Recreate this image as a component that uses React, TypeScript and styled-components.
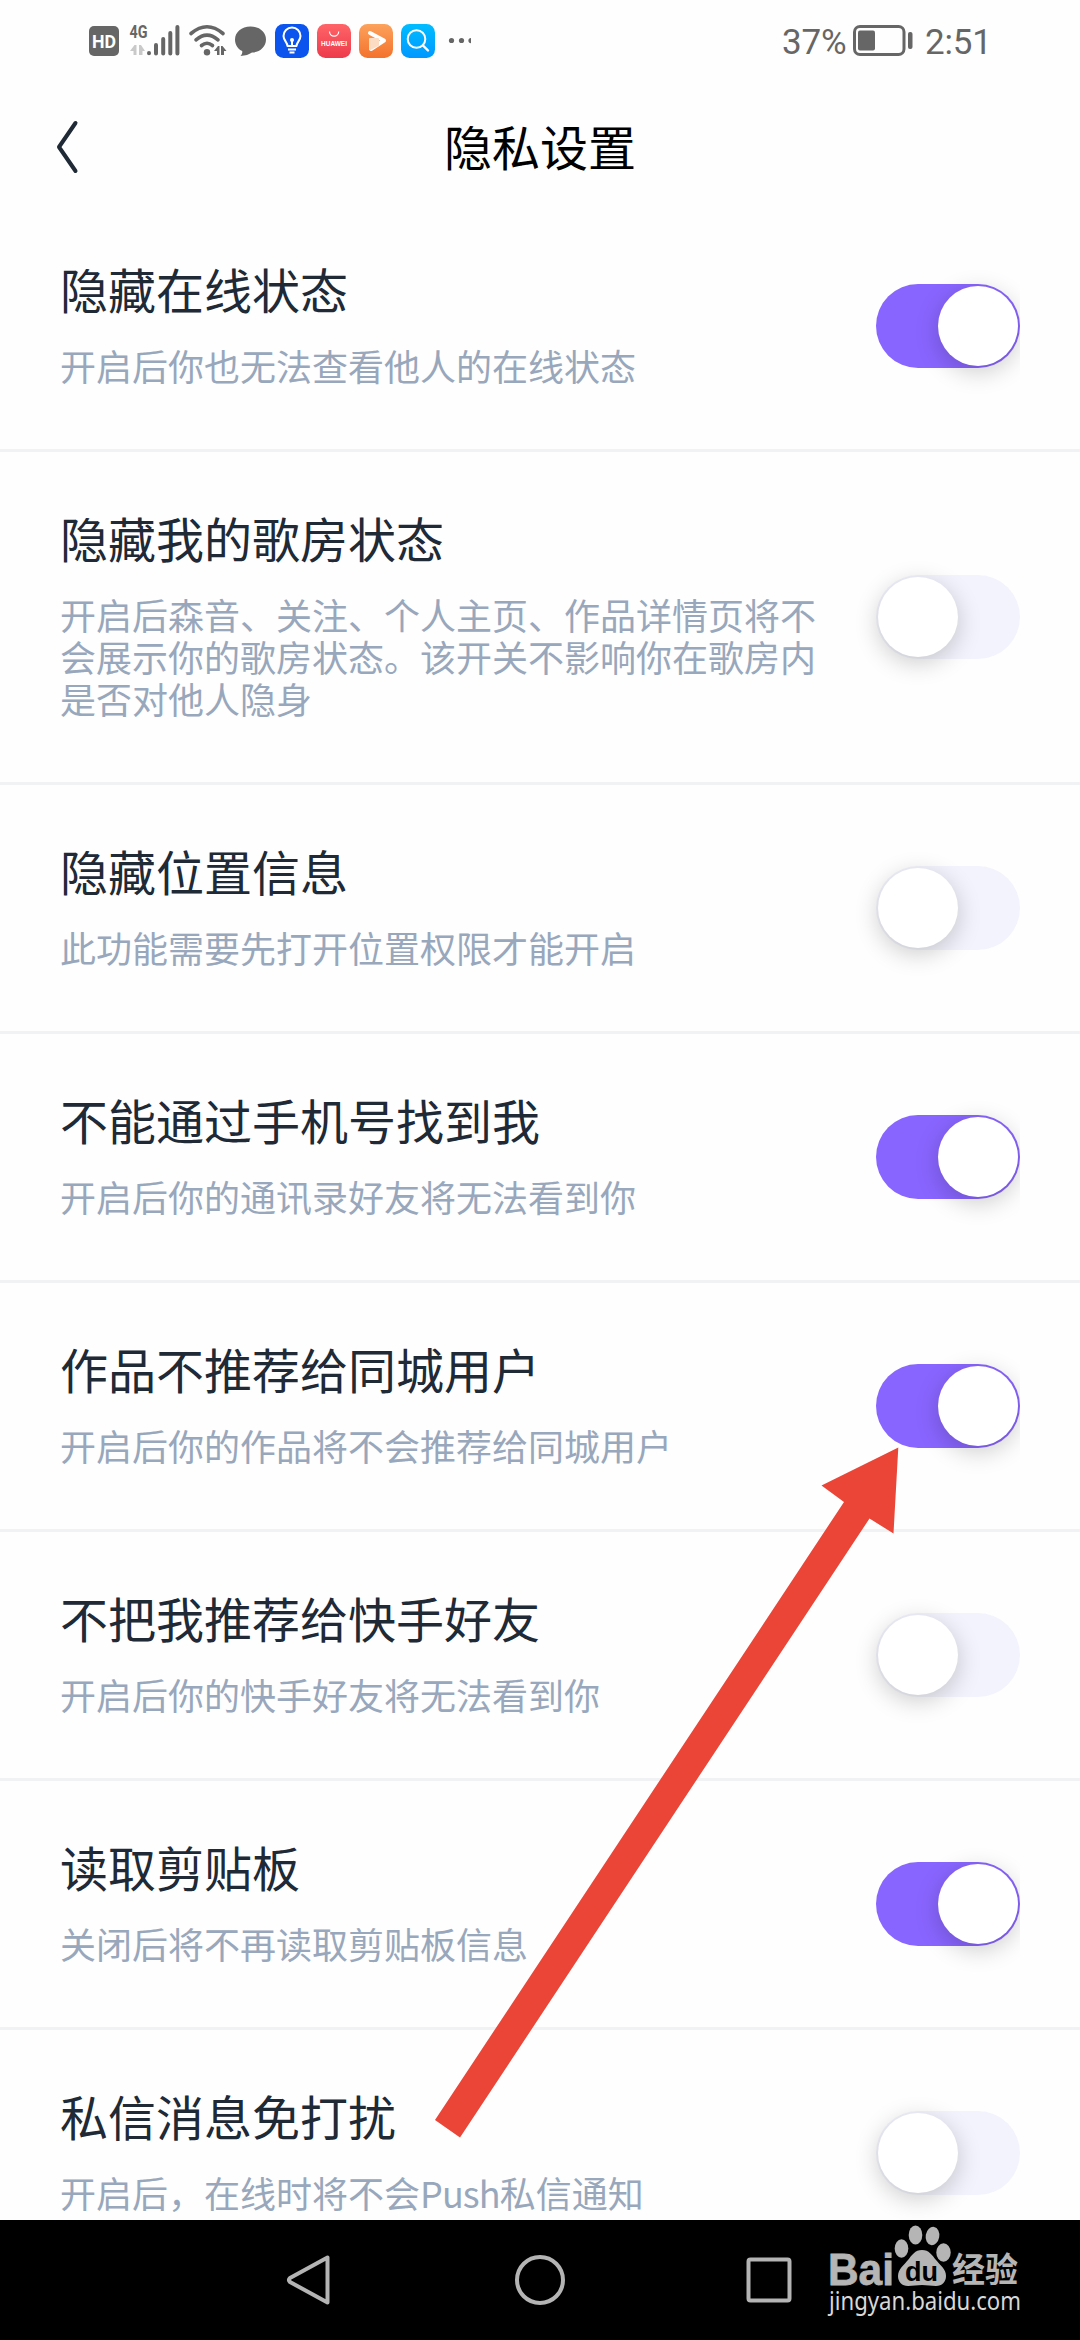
import React from 'react';
import styled, { createGlobalStyle } from 'styled-components';

const GlobalStyle = createGlobalStyle`
  * { box-sizing: border-box; }
  body {
    margin: 0;
    background: #fefefe;
    font-family: "Noto Sans CJK SC", "Noto Sans", sans-serif;
  }
`;

const Screen = styled.div`
  position: relative;
  display: flex;
  flex-direction: column;
  width: 1080px;
  height: 2340px;
  overflow: hidden;
  background: #fefefe;
`;

const StatusBar = styled.div`
  display: flex;
  justify-content: space-between;
  align-items: center;
  flex: none;
  height: 82px;
  padding: 0 95px 0 89px;
`;

const StatusIcons = styled.svg`
  display: block;
  width: 384px;
  height: 82px;
`;

const StatusRight = styled.div`
  display: flex;
  align-items: center;
  height: 82px;
`;

const StatusText = styled.span<{ $width: number }>`
  width: ${(p) => p.$width}px;
  padding-top: 3px;
  font: 400 35px/40px Roboto, sans-serif;
  color: #666;
  white-space: nowrap;
  letter-spacing: -0.2px;
`;

const Battery = styled.svg`
  display: block;
  width: 60px;
  height: 31px;
  margin: 0 12px 1px 7px;
`;

const Header = styled.header`
  display: grid;
  grid-template-columns: 120px 1fr 120px;
  align-items: center;
  flex: none;
  height: 121px;
  padding-top: 9px;
`;

const BackButton = styled.button`
  display: flex;
  height: 56px;
  margin: 0 0 1px 53px;
  padding: 0;
  border: 0;
  background: none;
`;

const PageTitle = styled.h1`
  margin: 0 0 5px;
  font-size: 48px;
  line-height: 60px;
  font-weight: 400;
  text-align: center;
  color: #000;
`;

const List = styled.main`
  flex: 1;
  min-height: 0;
  overflow: hidden;
`;

const Row = styled.section`
  display: flex;
  align-items: center;
  justify-content: space-between;
  padding: 57px 60px 63px;
  border-bottom: 3px solid #f1f2f4;
`;

const Copy = styled.div`
  display: flex;
  flex-direction: column;
  gap: 28px;
  width: 762px;
`;

const Label = styled.h2`
  margin: 0;
  font-size: 48px;
  line-height: 56px;
  font-weight: 400;
  color: #202936;
`;

const Description = styled.p`
  margin: 0;
  font-size: 36px;
  line-height: 42px;
  color: #98a7bb;
`;

const Latin = styled.span`
  letter-spacing: -0.9px;
`;

const Track = styled.button<{ $on: boolean }>`
  display: flex;
  justify-content: ${(p) => (p.$on ? 'flex-end' : 'flex-start')};
  flex: none;
  width: 144px;
  height: 84px;
  margin: 6px 0 0;
  padding: 2px;
  border: 0;
  border-radius: 42px;
  background: ${(p) => (p.$on ? '#8965ff' : '#f3f3fd')};
  clip-path: inset(-40px 0 -40px -40px);
`;

const Knob = styled.span`
  width: 80px;
  height: 80px;
  border-radius: 50%;
  background: #fff;
  box-shadow: 0 6px 24px rgba(0, 0, 0, 0.2);
`;

const NavBar = styled.nav`
  display: flex;
  flex: none;
  height: 120px;
  background: #000;
`;

const NavIcons = styled.svg`
  display: block;
  width: 1080px;
  height: 120px;
`;

const Arrow = styled.svg`
  position: absolute;
  left: 425px;
  top: 1440px;
  width: 480px;
  height: 705px;
  pointer-events: none;
`;

const Watermark = styled.svg`
  position: absolute;
  left: 820px;
  top: 2220px;
  width: 210px;
  height: 110px;
`;

type Setting = { label: string; text: React.ReactNode; on: boolean };

const settings: Setting[] = [
  { label: '隐藏在线状态', text: '开启后你也无法查看他人的在线状态', on: true },
  {
    label: '隐藏我的歌房状态',
    text: '开启后森音、关注、个人主页、作品详情页将不会展示你的歌房状态。该开关不影响你在歌房内是否对他人隐身',
    on: false,
  },
  { label: '隐藏位置信息', text: '此功能需要先打开位置权限才能开启', on: false },
  { label: '不能通过手机号找到我', text: '开启后你的通讯录好友将无法看到你', on: true },
  { label: '作品不推荐给同城用户', text: '开启后你的作品将不会推荐给同城用户', on: true },
  { label: '不把我推荐给快手好友', text: '开启后你的快手好友将无法看到你', on: false },
  { label: '读取剪贴板', text: '关闭后将不再读取剪贴板信息', on: true },
  {
    label: '私信消息免打扰',
    text: (
      <>
        开启后，在线时将不会<Latin>Push</Latin>私信通知
      </>
    ),
    on: false,
  },
];

function StatusGlyphs() {
  return (
    <StatusIcons viewBox="89 0 384 82">
      <defs>
        <linearGradient id="red" x1="0" y1="0" x2="0" y2="1">
          <stop offset="0" stopColor="#ff6468" />
          <stop offset="1" stopColor="#ee3a4c" />
        </linearGradient>
        <linearGradient id="orange" x1="0" y1="0" x2="0" y2="1">
          <stop offset="0" stopColor="#fca25c" />
          <stop offset="1" stopColor="#f4722c" />
        </linearGradient>
        <linearGradient id="blue" x1="0" y1="0" x2="0" y2="1">
          <stop offset="0" stopColor="#00bdff" />
          <stop offset="1" stopColor="#0098ff" />
        </linearGradient>
      </defs>
      <rect x="89" y="26" width="30" height="30" rx="5" fill="#666" />
      <text x="104" y="48" textAnchor="middle" fontFamily="Roboto" fontWeight="700" fontSize="19" textLength="24" lengthAdjust="spacingAndGlyphs" fill="#fff">HD</text>
      <text x="129.500" y="38" fontFamily="Roboto" fontWeight="700" fontSize="18.500" textLength="18" lengthAdjust="spacingAndGlyphs" fill="#666">4G</text>
      <path d="M130 51l4.500-6h2v10h-3v-4zM139 45h2l4 6h-2.500v4H139z" fill="#c9c9c9" />
      <g stroke="#666" strokeWidth="4" strokeLinecap="round">
        <path d="M149 53v0.200M156 45v8.500M163.200 39v14.500M170.300 33v20.500M177.400 27v26.500" />
      </g>
      <g fill="none" stroke="#666" strokeWidth="3.600" strokeLinecap="round">
        <path d="M191 33.500q16-13.500 32 0M196 39.800q11-9.500 22 0M201.500 45.500q5.500-4.500 11 0" />
      </g>
      <circle cx="207" cy="52.200" r="3.200" fill="#666" />
      <path d="M214 51l4-5h1.500v9H217v-4zM221 46h1.500l4 5H224v4h-3z" fill="#666" />
      <path d="M250.500 26.500c9 0 15.500 5.600 15.500 13s-6.500 13-14 13c-3 2-6.500 3.200-11.500 3.500 1.500-1.500 2-3 1.700-5-4.200-2-7.200-6-7.200-11.500 0-7.400 6.500-13 15.500-13z" fill="#666" />
      <rect x="275" y="24" width="34" height="34" rx="8.500" fill="#0b55ee" />
      <path d="M287.500 46c0-3.500-4-5.500-4-10a8.500 8.500 0 0 1 17 0c0 4.500-4 6.500-4 10zM288 49.500h8M289.500 52.500h5M292 46v-7" fill="none" stroke="#fff" strokeWidth="2" strokeLinejoin="round" />
      <circle cx="292" cy="40" r="2" fill="#fff" />
      <rect x="317" y="24" width="34" height="34" rx="8.500" fill="url(#red)" />
      <path d="M329.500 31.500a4.600 4.600 0 0 0 9.200 0" fill="none" stroke="#fff" strokeWidth="1.200" />
      <text x="334" y="46" textAnchor="middle" fontFamily="Liberation Sans" fontSize="6.500" fontWeight="700" textLength="26" lengthAdjust="spacingAndGlyphs" fill="#fff">HUAWEI</text>
      <rect x="359" y="24" width="34" height="34" rx="8.500" fill="url(#orange)" />
      <path d="M370 33l14 7.500L371 49" fill="none" stroke="#fff" strokeWidth="4" strokeLinejoin="round" strokeLinecap="round" />
      <path d="M370 39v10l8-4v-6z" fill="#fddcc4" stroke="#fddcc4" strokeWidth="2" strokeLinejoin="round" />
      <rect x="401" y="24" width="34" height="34" rx="8.500" fill="url(#blue)" />
      <circle cx="416.500" cy="39" r="8.800" fill="none" stroke="#fff" strokeWidth="2" />
      <path d="M423 45.500l5 5" stroke="#fff" strokeWidth="2.400" strokeLinecap="round" />
      <circle cx="451.500" cy="40.500" r="2.600" fill="#666" />
      <circle cx="461.500" cy="40.500" r="2.600" fill="#666" />
      <path d="M471 38a2.600 2.600 0 0 0 0 5.200z" fill="#666" />
    </StatusIcons>
  );
}

function SettingRow({ label, text, on }: Setting) {
  return (
    <Row>
      <Copy>
        <Label>{label}</Label>
        <Description>{text}</Description>
      </Copy>
      <Track $on={on} role="switch" aria-checked={on} aria-label={label}>
        <Knob />
      </Track>
    </Row>
  );
}

export default function App() {
  return (
    <>
      <GlobalStyle />
      <Screen>
        <StatusBar>
          <StatusGlyphs />
          <StatusRight>
            <StatusText $width={64}>37%</StatusText>
            <Battery viewBox="0 0 60 31">
              <rect x="1.500" y="1.500" width="49.500" height="28" rx="5.500" fill="none" stroke="#666" strokeWidth="3" />
              <rect x="5" y="5.500" width="17" height="20" rx="2" fill="#666" />
              <rect x="55" y="7" width="4.500" height="17" rx="2" fill="#666" />
            </Battery>
            <StatusText $width={60}>2:51</StatusText>
          </StatusRight>
        </StatusBar>
        <Header>
          <BackButton aria-label="back">
            <svg width="28" height="56" viewBox="0 0 28 56">
              <path d="M22.500 4L6 28L22.500 52" fill="none" stroke="#202a36" strokeWidth="4" strokeLinecap="round" strokeLinejoin="round" />
            </svg>
          </BackButton>
          <PageTitle>隐私设置</PageTitle>
        </Header>
        <List>
          {settings.map((s) => (
            <SettingRow key={s.label} {...s} />
          ))}
        </List>
        <NavBar>
          <NavIcons viewBox="0 0 1080 120" fill="none" stroke="#b4b4b4" strokeWidth="4" strokeLinejoin="round">
            <path d="M327.500 37.500v45L290 62q-2-2 0-4z" />
            <circle cx="540" cy="60" r="23" />
            <rect x="748.500" y="39.500" width="41" height="41" rx="2" />
          </NavIcons>
        </NavBar>
        <Arrow viewBox="425 1440 480 705">
          <polygon
            points="898.300,1447.500 893.500,1533.500 869.500,1518.500 460,2137.500 435,2120 844,1502 821.500,1485.500"
            fill="#ea4537"
          />
        </Arrow>
        <Watermark viewBox="820 2220 210 110" fill="#b5b5b5">
          <text x="828" y="2284.500" fontFamily="Liberation Sans" fontWeight="700" fontSize="44" textLength="66" lengthAdjust="spacingAndGlyphs" stroke="#b5b5b5" strokeWidth="0.800">Bai</text>
          <ellipse cx="901.500" cy="2248.500" rx="6.800" ry="9.200" />
          <ellipse cx="915.500" cy="2235" rx="6.800" ry="9.500" />
          <ellipse cx="932.500" cy="2236" rx="6.800" ry="9.200" transform="rotate(10 932.500 2236)" />
          <ellipse cx="943.500" cy="2252.500" rx="7.200" ry="9.200" />
          <path d="M922 2250c7 0 10 5 14 10s10 9 10 16c0 6-4 10-10 10-5 0-9-1-14-1s-9 1-14 1c-6 0-10-4-10-10 0-7 6-11 10-16s7-10 14-10z" />
          <text x="905" y="2281" fontFamily="Liberation Sans" fontWeight="700" fontSize="28" textLength="33" lengthAdjust="spacingAndGlyphs" fill="#000">du</text>
          <text x="952" y="2282" fontFamily="Noto Sans CJK SC" fontWeight="700" fontSize="34" textLength="66" lengthAdjust="spacingAndGlyphs">经验</text>
          <text x="829" y="2310" fontFamily="Noto Sans" fontSize="24.500" textLength="192" lengthAdjust="spacingAndGlyphs" fill="#d8d8d8">jingyan.baidu.com</text>
        </Watermark>
      </Screen>
    </>
  );
}
